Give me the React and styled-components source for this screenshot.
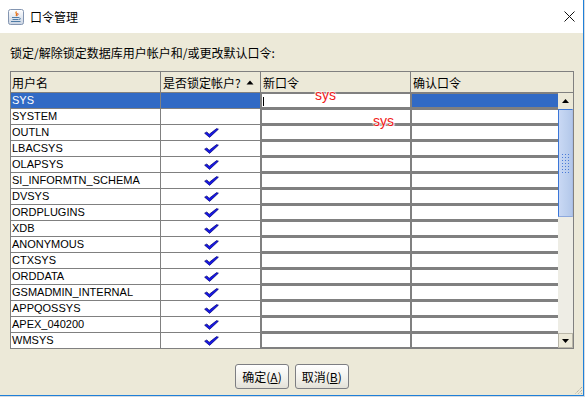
import React from 'react';
import styled, { createGlobalStyle } from 'styled-components';

const GlobalStyle = createGlobalStyle`
  html, body { margin: 0; padding: 0; background: #d8dbe0; }
  body { font-family: "Noto Sans CJK SC", "Liberation Sans", sans-serif; }
  #root { width: 585px; height: 397px; }
`;

const Window = styled.div`
  position: relative;
  width: 584px;
  height: 396px;
  box-sizing: border-box;
  border-right: 1px solid #1f80d8;
  border-bottom: 1px solid #1f80d8;
  display: flex;
  flex-direction: column;
  background: #ece9d8;
`;

const TitleBar = styled.div`
  height: 33px;
  flex: none;
  background: #fff;
  display: flex;
  align-items: center;
  padding-left: 8px;
`;

const TitleText = styled.span`
  margin-left: 6px;
  font-size: 12px;
  line-height: 16px;
  padding-top: 1px;
  color: #000;
`;

const CloseBox = styled.div`
  margin-left: auto;
  margin-right: 8px;
  display: flex;
  align-items: center;
`;

const Content = styled.div`
  flex: 1;
  display: flex;
  flex-direction: column;
  padding: 12px 9px 0 10px;
`;

const Label = styled.div`
  font-size: 12px;
  line-height: 16px;
  height: 16px;
  margin-bottom: 10px;
  color: #000;
  white-space: nowrap;
`;

const Pane = styled.div`
  width: 564px;
  height: 278px;
  box-sizing: border-box;
  border: 1px solid #808080;
  display: flex;
  flex-direction: column;
  background: #fff;
`;

const Header = styled.div`
  display: grid;
  grid-template-columns: 150px 100px 150px 162px;
  height: 21px;
  box-sizing: border-box;
  border-bottom: 1px solid #808080;
  background: #ece9d8;
`;

const HeaderCell = styled.div`
  box-sizing: border-box;
  border-right: ${p => (p.$last ? 'none' : '1px solid #808080')};
  padding-left: ${p => p.$pad || 1}px;
  padding-top: 1px;
  font-size: 12px;
  line-height: 19px;
  color: #000;
  display: flex;
  align-items: center;
  gap: 5px;
  white-space: nowrap;
`;

const Body = styled.div`
  display: flex;
  height: 255px;
`;

const Rows = styled.div`
  width: 547px;
  display: flex;
  flex-direction: column;
`;

const Row = styled.div`
  display: grid;
  grid-template-columns: 150px 100px 150px 147px;
  height: 16px;
  box-sizing: border-box;
  border-bottom: 1px solid #808080;
  &:last-child {
    height: 15px;
    border-bottom: none;
  }
`;

const NameCell = styled.div`
  box-sizing: border-box;
  background: ${p => (p.$selected ? '#316ac5' : '#fff')};
  color: ${p => (p.$selected ? '#fff' : '#000')};
  border-right: 1px solid #808080;
  font-family: "Liberation Sans", Arial, sans-serif;
  font-size: 11px;
  line-height: 15px;
  padding-left: 1px;
  white-space: nowrap;
  overflow: hidden;
`;

const LockCell = styled.div`
  box-sizing: border-box;
  background: ${p => (p.$selected ? '#316ac5' : '#fff')};
  border-right: 1px solid #808080;
  display: flex;
  align-items: center;
  justify-content: center;
  padding-left: 1px;
`;

const FieldCell = styled.div`
  box-sizing: border-box;
  height: 15px;
  border-top: 1px solid #808080;
  border-bottom: 1px solid #808080;
  border-left: 1px solid #808080;
  border-right: ${p => (p.$last ? 'none' : '1px solid #808080')};
  background: ${p => (p.$selected ? '#316ac5' : '#fff')};
  display: flex;
  align-items: center;
`;

const Caret = styled.span`
  width: 1px;
  height: 9px;
  margin-left: 1px;
  margin-top: 1px;
  background: #000;
`;

const ScrollBar = styled.div`
  width: 15px;
  display: flex;
  flex-direction: column;
  background: #eeede5;
`;

const ArrowButton = styled.div`
  height: ${p => p.$h}px;
  flex: none;
  box-sizing: border-box;
  background: #ece9d8;
  border: ${p => (p.$framed ? '1px solid #b9b6a8' : 'none')};
  display: flex;
  align-items: center;
  justify-content: center;
`;

const Thumb = styled.div`
  height: 108px;
  flex: none;
  box-sizing: border-box;
  border-top: 1px solid #3a76d8;
  border-left: 1px solid #3a76d8;
  border-right: 1px solid #a9bde5;
  border-bottom: 1px solid #8ea9dd;
  background: linear-gradient(to right, #c9d8f4, #bccfee 60%, #b3c7ea);
  display: flex;
  align-items: center;
  justify-content: center;
`;

const Grip = styled.div`
  width: 9px;
  height: 22px;
  margin-top: 1px;
  background-image: radial-gradient(circle, #4a7ad8 0.8px, transparent 1px);
  background-size: 3px 3px;
`;

const Track = styled.div`
  flex: 1;
`;

const ButtonRow = styled.div`
  display: flex;
  justify-content: center;
  gap: 6px;
  margin-top: 15px;
`;

const Button = styled.button`
  height: 25px;
  box-sizing: border-box;
  padding: 0 6px;
  margin: 0;
  border: 1px solid #7d7e82;
  border-radius: 3px;
  background: linear-gradient(#ffffff, #f1f0ea 60%, #e3e1d8);
  font-family: "Noto Sans CJK SC", "Liberation Sans", sans-serif;
  font-size: 12px;
  line-height: 23px;
  color: #000;
  white-space: nowrap;
`;

const Annotation = styled.span`
  position: absolute;
  left: ${p => p.$x}px;
  top: ${p => p.$y}px;
  font-family: "Liberation Sans", Arial, sans-serif;
  font-size: 14px;
  line-height: 14px;
  color: #f01818;
  text-shadow: 0 0 2px #fff, 0 0 1px #fff, 1px 1px 1px #fff, -1px -1px 1px #fff;
`;

const ResizeGrip = styled.svg`
  position: absolute;
  right: 0;
  bottom: 0;
`;

const JavaIcon = () => (
  <svg width="16" height="16" viewBox="0 0 16 16">
    <defs>
      <linearGradient id="jg" x1="0" y1="0" x2="0" y2="1">
        <stop offset="0" stopColor="#ffffff" />
        <stop offset="1" stopColor="#c9d3e2" />
      </linearGradient>
    </defs>
    <rect x="0.5" y="0.5" width="15" height="15" rx="2" fill="url(#jg)" stroke="#8395b1" />
    <path d="M8.5 2.5c-2 1.5 1.5 2.5 -0.5 4.5" stroke="#e76f00" strokeWidth="1.2" fill="none" />
    <path d="M10 4c-1 1 0.8 1.5 -0.5 2.5" stroke="#d9401a" strokeWidth="1" fill="none" />
    <path d="M4 8.5h7M4.5 10.5h6M3 12.5h9.5" stroke="#4f7ca6" strokeWidth="1.1" />
    <path d="M11.2 8.8c1.6 0 1.6 1.8 0 1.8" stroke="#4f7ca6" strokeWidth="0.9" fill="none" />
  </svg>
);

const CloseIcon = () => (
  <svg width="11" height="11" viewBox="0 0 11 11">
    <path d="M0.5 0.5L10.5 10.5M10.5 0.5L0.5 10.5" stroke="#111" strokeWidth="1" />
  </svg>
);

const SortUp = () => (
  <svg width="8" height="5" viewBox="0 0 8 5">
    <path d="M0.5 4.5L4 0.5L7.5 4.5Z" fill="#000" />
  </svg>
);

const ArrowUp = () => (
  <svg width="7" height="4" viewBox="0 0 7 4">
    <path d="M0 4L3.5 0L7 4Z" fill="#000" />
  </svg>
);

const ArrowDown = () => (
  <svg width="7" height="4" viewBox="0 0 7 4">
    <path d="M0 0L3.5 4L7 0Z" fill="#000" />
  </svg>
);

const Check = () => (
  <svg width="15" height="10" viewBox="0 0 15 10">
    <path d="M0.6 5.2L2.8 3.9L5.2 6.3L12.6 0.6L14.4 1.2L5.6 9.4Z" fill="#1616e8" stroke="#0a0a70" strokeWidth="0.7" strokeLinejoin="round" />
  </svg>
);

const users = [
  'SYS', 'SYSTEM', 'OUTLN', 'LBACSYS', 'OLAPSYS', 'SI_INFORMTN_SCHEMA', 'DVSYS',
  'ORDPLUGINS', 'XDB', 'ANONYMOUS', 'CTXSYS', 'ORDDATA', 'GSMADMIN_INTERNAL',
  'APPQOSSYS', 'APEX_040200', 'WMSYS',
];

export default function App() {
  return (
    <>
      <GlobalStyle />
      <Window>
        <TitleBar>
          <JavaIcon />
          <TitleText>口令管理</TitleText>
          <CloseBox>
            <CloseIcon />
          </CloseBox>
        </TitleBar>
        <Content>
          <Label>锁定/解除锁定数据库用户帐户和/或更改默认口令:</Label>
          <Pane>
            <Header>
              <HeaderCell>用户名</HeaderCell>
              <HeaderCell $pad={2}>
                是否锁定帐户?
                <SortUp />
              </HeaderCell>
              <HeaderCell $pad={2}>新口令</HeaderCell>
              <HeaderCell $pad={2} $last>确认口令</HeaderCell>
            </Header>
            <Body>
              <Rows>
                {users.map((u, i) => {
                  const selected = i === 0;
                  return (
                    <Row key={u}>
                      <NameCell $selected={selected}>{u}</NameCell>
                      <LockCell $selected={selected}>{i >= 2 && <Check />}</LockCell>
                      <FieldCell>{selected && <Caret />}</FieldCell>
                      <FieldCell $last $selected={selected} />
                    </Row>
                  );
                })}
              </Rows>
              <ScrollBar>
                <ArrowButton $h={16}>
                  <ArrowUp />
                </ArrowButton>
                <Thumb>
                  <Grip />
                </Thumb>
                <Track />
                <ArrowButton $h={15} $framed>
                  <ArrowDown />
                </ArrowButton>
              </ScrollBar>
            </Body>
          </Pane>
          <ButtonRow>
            <Button>确定(<u>A</u>)</Button>
            <Button>取消(<u>B</u>)</Button>
          </ButtonRow>
        </Content>
        <Annotation $x={315} $y={88}>sys</Annotation>
        <Annotation $x={373} $y={114}>sys</Annotation>
        <ResizeGrip width="10" height="10" viewBox="0 0 10 10">
          <path d="M9 2L2 9M9 5L5 9M9 8L8 9" stroke="#a09d90" strokeWidth="1" strokeDasharray="1 1" />
        </ResizeGrip>
      </Window>
    </>
  );
}
